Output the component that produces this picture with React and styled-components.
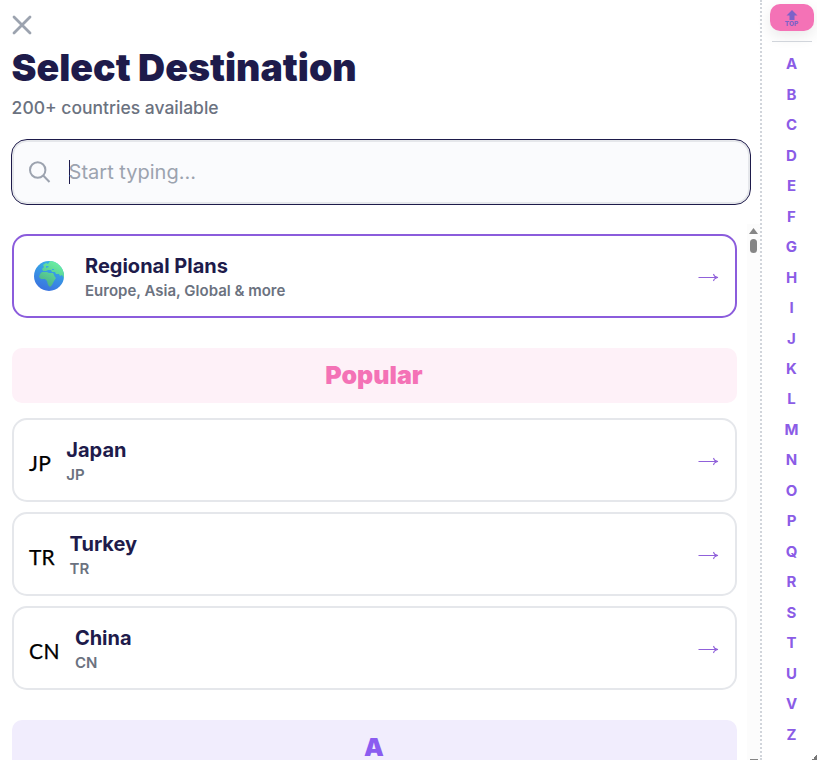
import React from "react";
import styled, { createGlobalStyle } from "styled-components";

const GlobalStyle = createGlobalStyle`
    * {
        box-sizing: border-box;
    }
    body {
        margin: 0;
        overflow: hidden;
        background: #ffffff;
        font-family: Inter, sans-serif;
    }
`;

const Container = styled.div`
    display: flex;
    height: 760px;
    overflow: hidden;
`;

const Main = styled.main`
    flex: 1;
    min-width: 0;
    display: flex;
    flex-direction: column;
    padding-left: 12px;
`;

const CloseButton = styled.button`
    display: block;
    width: 20px;
    height: 20px;
    margin-top: 15px;
    padding: 0;
    border: 0;
    background: none;
    svg {
        display: block;
    }
`;

const Title = styled.h1`
    margin: 10px 0 0 -0.5px;
    font-size: 37.5px;
    line-height: 45px;
    font-weight: 900;
    color: #1e1b4b;
    white-space: nowrap;
`;

const Subtitle = styled.p`
    margin: 6px 0 0 -0.4px;
    font-size: 17.5px;
    line-height: 24px;
    font-weight: 500;
    color: #6b7280;
`;

const SearchBox = styled.div`
    display: flex;
    align-items: center;
    flex-shrink: 0;
    height: 64px;
    margin: 20px 10px 0 0;
    padding-left: 14px;
    border: 2px solid #e5e7eb;
    border-radius: 15px;
    outline: 1px solid #1e1b4b;
    background: #fafbfd;
`;

const Caret = styled.span`
    width: 1px;
    height: 24px;
    margin-left: 18px;
    background: #1e1b4b;
`;

const Placeholder = styled.span`
    margin-left: -1.4px;
    font-size: 20px;
    line-height: 24px;
    color: #9ca3af;
`;

const ListArea = styled.div`
    display: flex;
    flex: 1;
    min-height: 0;
    margin-top: 20px;
    overflow: hidden;
`;

const List = styled.div`
    flex: 1;
    padding-top: 10px;
`;

const Card = styled.div`
    display: flex;
    align-items: center;
    height: 84px;
    margin-bottom: 10px;
    padding: 2px 16px 0 ${(props) => (props.$regional ? "20px" : "15px")};
    border: 2px solid ${(props) => (props.$regional ? "#8b5cdc" : "#e5e7eb")};
    border-radius: 15px;
    background: #ffffff;
    svg {
        flex-shrink: 0;
    }
`;

const Flag = styled.span`
    margin: 3px 15px 0 0;
    font-family: Lato, sans-serif;
    font-size: 21px;
    line-height: 28px;
    letter-spacing: ${(props) => props.$tracking};
    -webkit-text-stroke: 0.25px #000000;
    color: #000000;
`;

const Info = styled.div`
    flex: 1;
    margin-left: ${(props) => (props.$regional ? "21px" : "0")};
`;

const Name = styled.div`
    font-size: 20px;
    line-height: 26px;
    font-weight: 700;
    color: #1e1b4b;
`;

const Detail = styled.div`
    font-size: 15px;
    line-height: 23px;
    font-weight: 600;
    color: #6b7280;
`;

const SectionHeading = styled.h2`
    height: 55px;
    margin: 30px 0 15px;
    padding-right: 1px;
    border-radius: 10px;
    font-size: 25px;
    line-height: 54px;
    font-weight: 900;
    text-align: center;
    color: ${(props) => props.$color};
    background: ${(props) => props.$background};
`;

const ScrollTrack = styled.div`
    display: flex;
    flex-direction: column;
    align-items: center;
    width: 13px;
    margin-left: 10px;
    padding-top: 4px;
    background: #fcfcfc;
`;

const ScrollThumb = styled.div`
    width: 7px;
    height: 14px;
    margin-top: 5px;
    border-radius: 4px;
    background: #858585;
`;

const ScrollEnd = styled.div`
    width: 8px;
    height: 1px;
    margin-top: auto;
    background: #858585;
`;

const Rail = styled.nav`
    width: 57px;
    display: flex;
    flex-direction: column;
    align-items: center;
    padding-top: 4px;
    padding-left: 4px;
    border-left: 2px dotted #d1d5db;
`;

const TopButton = styled.div`
    display: flex;
    flex-direction: column;
    align-items: center;
    width: 44px;
    height: 27px;
    padding-top: 6px;
    border-radius: 10px;
    background: #f472b6;
    box-shadow: 0 5px 15px rgba(0, 0, 0, 0.09);
    svg {
        display: block;
    }
`;

const TopLabel = styled.span`
    margin-top: 0.5px;
    font-size: 6.5px;
    line-height: 6px;
    font-weight: 800;
    letter-spacing: 0;
    color: #7c62c8;
`;

const RailLine = styled.div`
    width: 40px;
    height: 1px;
    margin: 10px 0 7.3px;
    background: #d1d5db;
`;

const Letter = styled.div`
    height: 30.48px;
    font-size: 15px;
    line-height: 30.48px;
    font-weight: 700;
    color: #8b5ce6;
`;

const Corner = styled.div`
    position: absolute;
    left: 812px;
    top: 755px;
    width: 5px;
    height: 5px;
    background: linear-gradient(135deg, transparent 50%, #777777 50%);
`;

const popular = [
    { code: "JP", name: "Japan", tracking: "0.4px" },
    { code: "TR", name: "Turkey", tracking: "0px" },
    { code: "CN", name: "China", tracking: "0.4px" },
];

const letters = "ABCDEFGHIJKLMNOPQRSTUVZ".split("");

function Arrow() {
    return (
        <svg width="21" height="9" viewBox="0 0 21 9" fill="none" stroke="#9061da" strokeWidth="1.1">
            <path d="M0.5 4.5H20M15.5 1C16 3 18 4.3 20 4.5C18 4.7 16 6 15.5 8" />
            <path d="M17 3L20 4.5L17 6Z" fill="#9061da" stroke="none" />
        </svg>
    );
}

const GlobeIcon = styled.svg`
    display: block;
    margin-top: -3px;
`;

function Globe() {
    return (
        <GlobeIcon width="30" height="30" viewBox="0 0 30 30">
            <defs>
                <linearGradient id="ocean" x1="0.7" y1="0" x2="0.3" y2="1">
                    <stop offset="0" stopColor="#35b4e8" />
                    <stop offset="1" stopColor="#3b70df" />
                </linearGradient>
                <linearGradient id="land" x1="0.8" y1="0" x2="0.3" y2="1">
                    <stop offset="0" stopColor="#6cf5a5" />
                    <stop offset="1" stopColor="#4aae86" />
                </linearGradient>
                <clipPath id="sphere">
                    <circle cx="15" cy="15" r="15" />
                </clipPath>
            </defs>
            <g clipPath="url(#sphere)">
                <rect width="30" height="30" fill="url(#ocean)" />
                <path
                    fill="url(#land)"
                    d="M8 8L10 6L9 4L12 2L14 3L16 0H30V17L28 14L26 15L25 13L22 13L21 11L18 11L17 9L14 9L12 10L9 10ZM6 13L8 11L13 11L15 12L19 12L21 16L22 17L20 20L18 24L16 26L14 24L13 20L11 18L7 18L5 16Z"
                />
                <path fill="#35a9e4" d="M12 5L14 5L15 6L12 7ZM18 8L20 8L20 9L18 9Z" />
            </g>
        </GlobeIcon>
    );
}

function App() {
    return (
        <Container>
            <GlobalStyle />
            <Main>
                <CloseButton aria-label="Close">
                    <svg width="20" height="20" viewBox="0 0 20 20" stroke="#9ca3af" strokeWidth="2.8" strokeLinecap="round">
                        <path d="M2 2L18 18M18 2L2 18" />
                    </svg>
                </CloseButton>
                <Title>Select Destination</Title>
                <Subtitle>200+ countries available</Subtitle>
                <SearchBox>
                    <svg width="23" height="23" viewBox="0 0 23 23" fill="none" stroke="#9ca3af" strokeWidth="2">
                        <circle cx="9.7" cy="9" r="7.7" />
                        <path d="M15.2 14.5L21.5 21" />
                    </svg>
                    <Caret />
                    <Placeholder>Start typing...</Placeholder>
                </SearchBox>
                <ListArea>
                    <List>
                        <Card $regional>
                            <Globe />
                            <Info $regional>
                                <Name>Regional Plans</Name>
                                <Detail>Europe, Asia, Global &amp; more</Detail>
                            </Info>
                            <Arrow />
                        </Card>
                        <SectionHeading $color="#f472b6" $background="#fef1f8">Popular</SectionHeading>
                        {popular.map((country) => (
                            <Card key={country.code}>
                                <Flag $tracking={country.tracking}>{country.code}</Flag>
                                <Info>
                                    <Name>{country.name}</Name>
                                    <Detail>{country.code}</Detail>
                                </Info>
                                <Arrow />
                            </Card>
                        ))}
                        <SectionHeading $color="#8b5cf0" $background="#f1edfd">A</SectionHeading>
                    </List>
                    <ScrollTrack>
                        <svg width="9" height="6" viewBox="0 0 9 6" fill="#858585">
                            <path d="M4.5 0L9 6H0Z" />
                        </svg>
                        <ScrollThumb />
                        <ScrollEnd />
                    </ScrollTrack>
                </ListArea>
            </Main>
            <Rail>
                <TopButton>
                    <svg width="12" height="10" viewBox="0 0 12 10" fill="#7c62c8">
                        <path d="M6 0L11.5 5.5H8.5V10H3.5V5.5H0.5Z" />
                    </svg>
                    <TopLabel>TOP</TopLabel>
                </TopButton>
                <RailLine />
                {letters.map((letter) => (
                    <Letter key={letter}>{letter}</Letter>
                ))}
            </Rail>
            <Corner />
        </Container>
    );
}

export default App;
